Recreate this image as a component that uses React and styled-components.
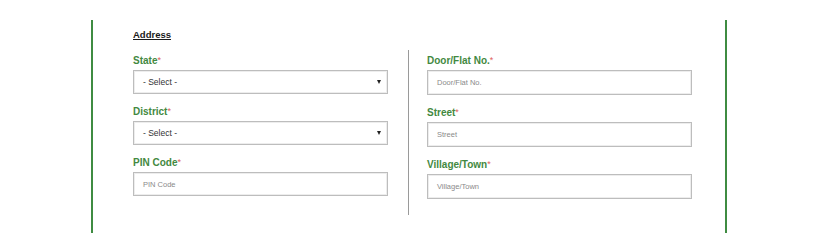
import styled, { createGlobalStyle } from 'styled-components'

const GlobalStyle = createGlobalStyle`
  html, body {
    margin: 0;
    padding: 0;
    background: #fff;
    font-family: 'Liberation Sans', Arial, sans-serif;
  }
`

const Page = styled.div`
  padding-top: 20px;
  height: 243px;
  box-sizing: border-box;
`

const Panel = styled.section`
  margin-left: 91px;
  width: 636px;
  height: 213px;
  box-sizing: border-box;
  border-left: 2px solid #3f8c42;
  border-right: 2px solid #3f8c42;
  padding: 8px 0 0 40px;
`

const Heading = styled.h3`
  margin: 0 0 8px;
  font-size: 9.5px;
  line-height: 14px;
  font-weight: bold;
  color: #1a1a1a;
  text-decoration: underline;
`

const Columns = styled.div`
  display: flex;
  align-items: stretch;
  height: 165px;
`

const Column = styled.div`
  width: ${(p) => p.$width}px;
  padding-top: 4px;
  display: flex;
  flex-direction: column;
  gap: 11px;
`

const Divider = styled.div`
  width: 1px;
  background: #9a9a9a;
  margin: 0 18px 0 20px;
`

const Field = styled.div`
  display: flex;
  flex-direction: column;
  gap: 2px;
`

const Label = styled.label`
  font-size: 10px;
  line-height: 14px;
  font-weight: bold;
  color: #43893f;

  span {
    color: #e0605a;
    font-weight: normal;
    font-size: 9px;
    vertical-align: top;
    line-height: 12px;
  }
`

const Box = styled.div`
  height: ${(p) => p.$height}px;
  box-sizing: border-box;
  border: 1px solid #bdbdbd;
  box-shadow: inset 0 0 0 1px #ededed;
  background: #fff;
  display: flex;
  align-items: center;
  justify-content: space-between;
  padding: 0 6px 0 9px;
  font-size: ${(p) => (p.$select ? 8.5 : 7.5)}px;
  color: ${(p) => (p.$select ? '#333' : '#8a8a8a')};
`

const Arrow = styled.i`
  width: 0;
  height: 0;
  border-left: 2.5px solid transparent;
  border-right: 2.5px solid transparent;
  border-top: 4px solid #222;
`

const left = [
  { label: 'State', select: true },
  { label: 'District', select: true },
  { label: 'PIN Code', placeholder: 'PIN Code' }
]

const right = [
  { label: 'Door/Flat No.', placeholder: 'Door/Flat No.' },
  { label: 'Street', placeholder: 'Street' },
  { label: 'Village/Town', placeholder: 'Village/Town' }
]

const renderField = (f, height) => (
  <Field key={f.label}>
    <Label>
      {f.label}
      <span>*</span>
    </Label>
    <Box $height={height} $select={f.select}>
      {f.select ? '- Select -' : f.placeholder}
      {f.select && <Arrow />}
    </Box>
  </Field>
)

const App = () => {
  return (
    <>
      <GlobalStyle />
      <Page>
        <Panel>
          <Heading>Address</Heading>
          <Columns>
            <Column $width={255}>{left.map((f) => renderField(f, 24))}</Column>
            <Divider />
            <Column $width={265}>{right.map((f) => renderField(f, 25))}</Column>
          </Columns>
        </Panel>
      </Page>
    </>
  )
}

export default App
